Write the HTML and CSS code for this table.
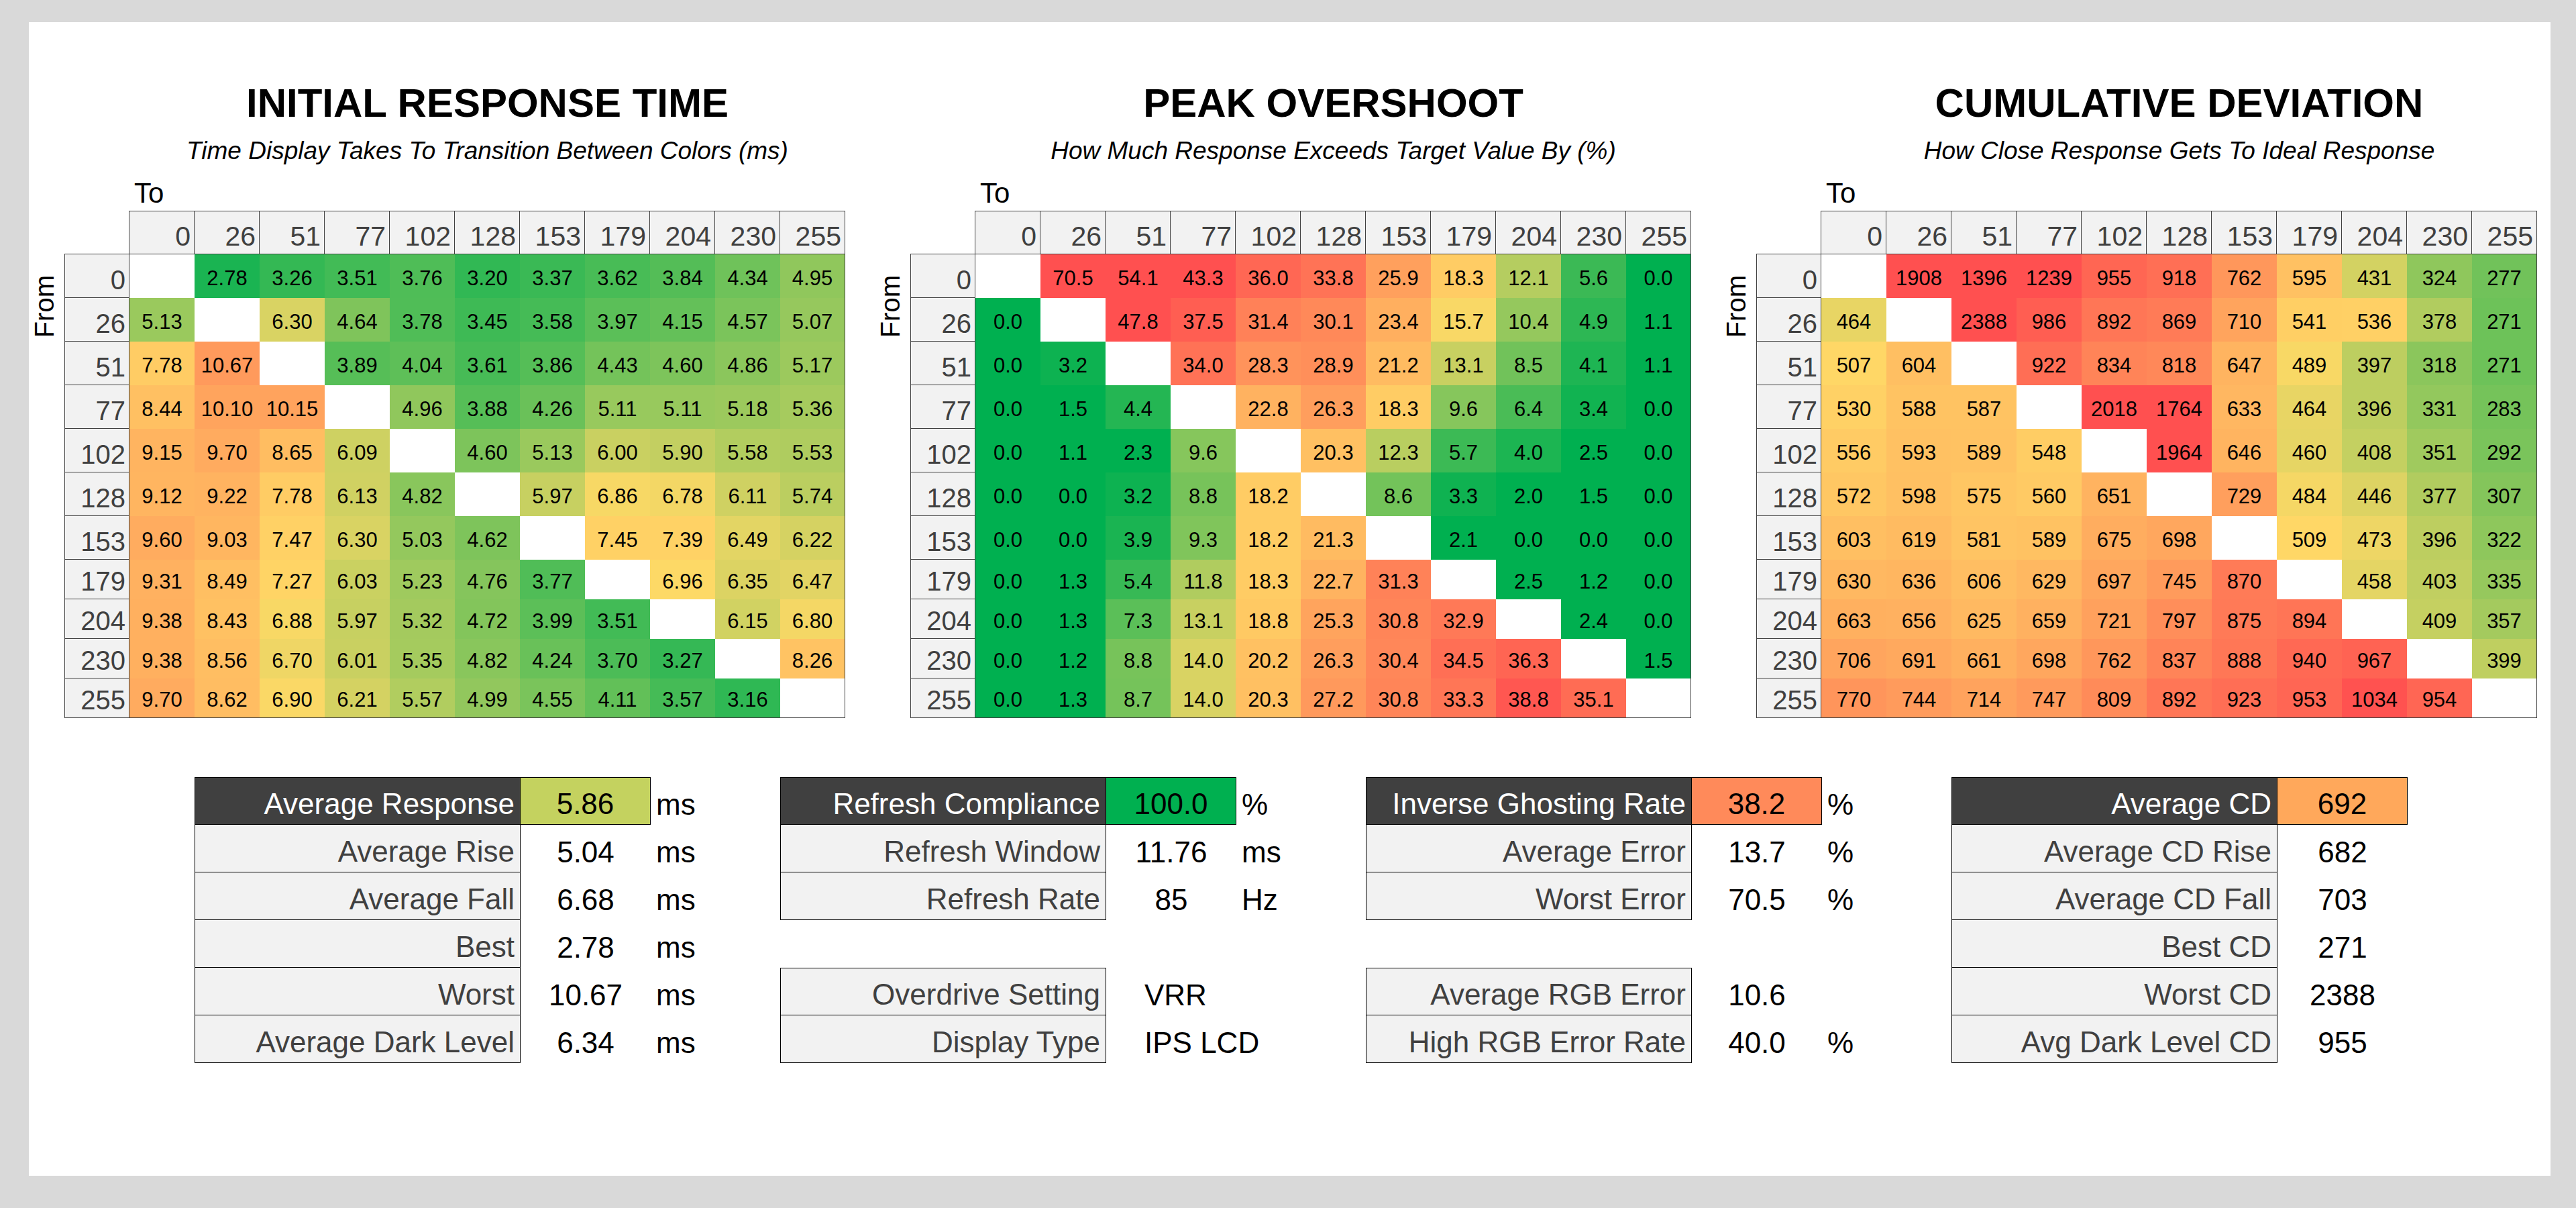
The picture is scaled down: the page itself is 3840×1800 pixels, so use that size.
FILE: index.html
```html
<!DOCTYPE html>
<html lang="en">
<head>
<meta charset="utf-8">
<title>Response Time Results</title>
<link rel="stylesheet" href="styles.css">
</head>
<body>
<div class="sheet">
  <div class="heatmaps">
    <section class="hm" data-set="irt">
      <h2 class="hm-title">INITIAL RESPONSE TIME</h2>
      <p class="hm-sub">Time Display Takes To Transition Between Colors (ms)</p>
      <div class="hm-to">To</div>
      <div class="hm-body">
        <div class="hm-from"><span>From</span></div>
        <div class="grid"></div>
      </div>
    </section>
    <section class="hm" data-set="ovs">
      <h2 class="hm-title">PEAK OVERSHOOT</h2>
      <p class="hm-sub">How Much Response Exceeds Target Value By (%)</p>
      <div class="hm-to">To</div>
      <div class="hm-body">
        <div class="hm-from"><span>From</span></div>
        <div class="grid"></div>
      </div>
    </section>
    <section class="hm" data-set="cd">
      <h2 class="hm-title">CUMULATIVE DEVIATION</h2>
      <p class="hm-sub">How Close Response Gets To Ideal Response</p>
      <div class="hm-to">To</div>
      <div class="hm-body">
        <div class="hm-from"><span>From</span></div>
        <div class="grid"></div>
      </div>
    </section>
  </div>

  <div class="stats">
    <div class="block">
      <div class="lbl head">Average Response</div><div class="val box v-irt">5.86</div><div class="unit">ms</div>
      <div class="lbl">Average Rise</div><div class="val">5.04</div><div class="unit">ms</div>
      <div class="lbl">Average Fall</div><div class="val">6.68</div><div class="unit">ms</div>
      <div class="lbl">Best</div><div class="val">2.78</div><div class="unit">ms</div>
      <div class="lbl">Worst</div><div class="val">10.67</div><div class="unit">ms</div>
      <div class="lbl">Average Dark Level</div><div class="val">6.34</div><div class="unit">ms</div>
    </div>
    <div class="block">
      <div class="lbl head">Refresh Compliance</div><div class="val box v-rc">100.0</div><div class="unit">%</div>
      <div class="lbl">Refresh Window</div><div class="val">11.76</div><div class="unit">ms</div>
      <div class="lbl">Refresh Rate</div><div class="val">85</div><div class="unit">Hz</div>
      <div class="gap"></div><div class="gap"></div><div class="gap"></div>
      <div class="lbl top">Overdrive Setting</div><div class="val txt">VRR</div><div class="unit"></div>
      <div class="lbl">Display Type</div><div class="val txt">IPS LCD</div><div class="unit"></div>
    </div>
    <div class="block">
      <div class="lbl head">Inverse Ghosting Rate</div><div class="val box v-ig">38.2</div><div class="unit">%</div>
      <div class="lbl">Average Error</div><div class="val">13.7</div><div class="unit">%</div>
      <div class="lbl">Worst Error</div><div class="val">70.5</div><div class="unit">%</div>
      <div class="gap"></div><div class="gap"></div><div class="gap"></div>
      <div class="lbl top">Average RGB Error</div><div class="val">10.6</div><div class="unit"></div>
      <div class="lbl">High RGB Error Rate</div><div class="val">40.0</div><div class="unit">%</div>
    </div>
    <div class="block">
      <div class="lbl head">Average CD</div><div class="val box v-cd">692</div><div class="unit"></div>
      <div class="lbl">Average CD Rise</div><div class="val">682</div><div class="unit"></div>
      <div class="lbl">Average CD Fall</div><div class="val">703</div><div class="unit"></div>
      <div class="lbl">Best CD</div><div class="val">271</div><div class="unit"></div>
      <div class="lbl">Worst CD</div><div class="val">2388</div><div class="unit"></div>
      <div class="lbl">Avg Dark Level CD</div><div class="val">955</div><div class="unit"></div>
    </div>
  </div>
</div>
<script src="script.js"></script>
</body>
</html>
```

FILE: styles.css
```css
* { box-sizing: border-box; }
html, body { margin: 0; }
body {
  background: #d9d9d9;
  padding: 33px 0 0 43px;
  width: 3840px;
  height: 1800px;
  overflow: hidden;
  font-family: "Liberation Sans", Arial, sans-serif;
  color: #000;
}
.sheet {
  width: 3759px;
  height: 1719px;
  background: #fff;
  padding: 91px 0 0 3px;
}

/* ---------- heatmaps ---------- */
.heatmaps { display: flex; gap: 47px; }
.hm { width: 1214px; flex: none; }
.hm-title {
  margin: 0 0 0 147px;
  width: 1067px;
  text-align: center;
  font-size: 60px;
  line-height: 60px;
  font-weight: bold;
}
.hm-sub {
  margin: 23px 0 0 147px;
  width: 1067px;
  text-align: center;
  font-size: 37px;
  line-height: 36px;
  font-style: italic;
}
.hm-to {
  margin: 24px 0 0 147px;
  padding-left: 7px;
  font-size: 42px;
  line-height: 42px;
}
.hm-body { display: flex; margin-top: 5px; }
.hm-from { width: 50px; flex: none; padding-top: 96px; }
.hm-from span {
  display: block;
  width: 40px;
  writing-mode: vertical-rl;
  transform: rotate(180deg);
  font-size: 40px;
  line-height: 40px;
}
.grid {
  display: grid;
  grid-template-columns: repeat(12, 97px);
  grid-template-rows: 65px repeat(7, 65px) repeat(4, 59px);
}
.c { display: flex; white-space: nowrap; }
.hd {
  background: #f2f2f2;
  border-top: 1px solid #404040;
  border-right: 1px solid #404040;
  border-bottom: 1px solid #404040;
  justify-content: flex-end;
  align-items: flex-end;
  padding: 0 5px 5px 0;
  font-size: 41px;
  line-height: 41px;
  color: #404040;
}
.hd.first { box-shadow: -1px 0 0 #404040; }
.rl {
  background: #f2f2f2;
  border-left: 1px solid #404040;
  border-right: 1px solid #404040;
  border-bottom: 1px solid #404040;
  justify-content: flex-end;
  align-items: flex-end;
  padding: 0 5px 6px 0;
  font-size: 40px;
  line-height: 40px;
  color: #404040;
}
.rl.first { box-shadow: 0 -1px 0 #404040; }
.d {
  justify-content: center;
  align-items: center;
  padding-top: 5px;
  font-size: 31px;
  line-height: 31px;
  background: #fff;
}
.d.lastc { border-right: 1px solid #404040; }
.d.lastr { border-bottom: 1px solid #404040; }

/* ---------- stats ---------- */
.stats { display: flex; margin: 88px 0 0 244px; }
.block {
  width: 873px;
  flex: none;
  display: grid;
  grid-template-columns: 486px 194px auto;
  grid-template-rows: repeat(6, 71px);
}
.block > div {
  display: flex;
  align-items: flex-end;
  font-size: 44px;
  line-height: 44px;
  padding-bottom: 8px;
  white-space: nowrap;
}
.lbl {
  justify-content: flex-end;
  padding-right: 8px;
  background: #f2f2f2;
  color: #404040;
  border-left: 1px solid #000;
  border-right: 1px solid #000;
  border-bottom: 1px solid #000;
}
.lbl.head { background: #404040; color: #fff; border-top: 1px solid #000; }
.lbl.top { border-top: 1px solid #000; }
.val { justify-content: center; }
.val.box { border: 1px solid #000; border-left: none; }
.val.txt { justify-content: flex-start; padding-left: 57px; overflow: visible; }
.unit { padding-left: 8px; }
.v-irt { background: #c4d25f; }
.v-rc { background: #00b050; }
.v-ig { background: #ff8a5a; }
.v-cd { background: #ffa85b; }
```

FILE: script.js
```js
(function () {
  var LEVELS = ["0", "26", "51", "77", "102", "128", "153", "179", "204", "230", "255"];
  var G = [0, 176, 80], Y = [255, 217, 102], R = [255, 80, 80];

  function mix(p, q, t) {
    var out = [];
    for (var i = 0; i < 3; i++) out.push(Math.round(p[i] + (q[i] - p[i]) * t));
    return "rgb(" + out.join(",") + ")";
  }
  function shade(v, s) {
    if (v <= s[0]) return mix(G, G, 0);
    if (v <= s[1]) return mix(G, Y, (v - s[0]) / (s[1] - s[0]));
    if (v <= s[2]) return mix(Y, R, (v - s[1]) / (s[2] - s[1]));
    return mix(R, R, 0);
  }

  var SETS = {
    irt: { scale: [2.3, 7, 15], rows: [
      "- 2.78 3.26 3.51 3.76 3.20 3.37 3.62 3.84 4.34 4.95",
      "5.13 - 6.30 4.64 3.78 3.45 3.58 3.97 4.15 4.57 5.07",
      "7.78 10.67 - 3.89 4.04 3.61 3.86 4.43 4.60 4.86 5.17",
      "8.44 10.10 10.15 - 4.96 3.88 4.26 5.11 5.11 5.18 5.36",
      "9.15 9.70 8.65 6.09 - 4.60 5.13 6.00 5.90 5.58 5.53",
      "9.12 9.22 7.78 6.13 4.82 - 5.97 6.86 6.78 6.11 5.74",
      "9.60 9.03 7.47 6.30 5.03 4.62 - 7.45 7.39 6.49 6.22",
      "9.31 8.49 7.27 6.03 5.23 4.76 3.77 - 6.96 6.35 6.47",
      "9.38 8.43 6.88 5.97 5.32 4.72 3.99 3.51 - 6.15 6.80",
      "9.38 8.56 6.70 6.01 5.35 4.82 4.24 3.70 3.27 - 8.26",
      "9.70 8.62 6.90 6.21 5.57 4.99 4.55 4.11 3.57 3.16 -"
    ]},
    ovs: { scale: [2.5, 16, 40], rows: [
      "- 70.5 54.1 43.3 36.0 33.8 25.9 18.3 12.1 5.6 0.0",
      "0.0 - 47.8 37.5 31.4 30.1 23.4 15.7 10.4 4.9 1.1",
      "0.0 3.2 - 34.0 28.3 28.9 21.2 13.1 8.5 4.1 1.1",
      "0.0 1.5 4.4 - 22.8 26.3 18.3 9.6 6.4 3.4 0.0",
      "0.0 1.1 2.3 9.6 - 20.3 12.3 5.7 4.0 2.5 0.0",
      "0.0 0.0 3.2 8.8 18.2 - 8.6 3.3 2.0 1.5 0.0",
      "0.0 0.0 3.9 9.3 18.2 21.3 - 2.1 0.0 0.0 0.0",
      "0.0 1.3 5.4 11.8 18.3 22.7 31.3 - 2.5 1.2 0.0",
      "0.0 1.3 7.3 13.1 18.8 25.3 30.8 32.9 - 2.4 0.0",
      "0.0 1.2 8.8 14.0 20.2 26.3 30.4 34.5 36.3 - 1.5",
      "0.0 1.3 8.7 14.0 20.3 27.2 30.8 33.3 38.8 35.1 -"
    ]},
    cd: { scale: [100, 500, 1040], rows: [
      "- 1908 1396 1239 955 918 762 595 431 324 277",
      "464 - 2388 986 892 869 710 541 536 378 271",
      "507 604 - 922 834 818 647 489 397 318 271",
      "530 588 587 - 2018 1764 633 464 396 331 283",
      "556 593 589 548 - 1964 646 460 408 351 292",
      "572 598 575 560 651 - 729 484 446 377 307",
      "603 619 581 589 675 698 - 509 473 396 322",
      "630 636 606 629 697 745 870 - 458 403 335",
      "663 656 625 659 721 797 875 894 - 409 357",
      "706 691 661 698 762 837 888 940 967 - 399",
      "770 744 714 747 809 892 923 953 1034 954 -"
    ]}
  };

  var sections = document.querySelectorAll(".hm");
  for (var k = 0; k < sections.length; k++) {
    var sec = sections[k];
    var set = SETS[sec.getAttribute("data-set")];
    var grid = sec.querySelector(".grid");
    var html = '<div class="c corner"></div>';
    for (var i = 0; i < LEVELS.length; i++) {
      html += '<div class="c hd' + (i === 0 ? " first" : "") + '">' + LEVELS[i] + "</div>";
    }
    for (var r = 0; r < set.rows.length; r++) {
      var vals = set.rows[r].split(" ");
      html += '<div class="c rl' + (r === 0 ? " first" : "") + '">' + LEVELS[r] + "</div>";
      for (var c = 0; c < vals.length; c++) {
        var cls = "c d" + (c === 10 ? " lastc" : "") + (r === 10 ? " lastr" : "");
        if (vals[c] === "-") {
          html += '<div class="' + cls + '"></div>';
        } else {
          html += '<div class="' + cls + '" style="background:' + shade(parseFloat(vals[c]), set.scale) + '">' + vals[c] + "</div>";
        }
      }
    }
    grid.innerHTML = html;
  }
})();
```
